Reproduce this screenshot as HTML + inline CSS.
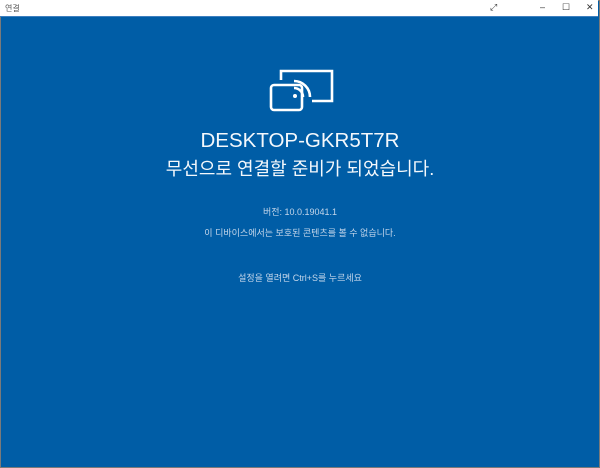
<!DOCTYPE html>
<html><head><meta charset="utf-8"><style>
html,body{margin:0;padding:0;width:600px;height:467px;overflow:hidden;background:#005da6;font-family:"Liberation Sans","Noto Sans CJK KR",sans-serif}
.win{position:absolute;left:0;top:0;width:598px;height:466px;border:1px solid #7a7a7a;border-top-color:#8a7f78}
.tb{position:absolute;left:0;top:0;width:598px;height:16px;background:#fff;border-bottom:1px solid #3d7fbf}
.tb .t{position:absolute;left:5px;top:3px;font-size:8px;color:#555}
.tb span{position:absolute;top:2px;font-size:9px;color:#333}
.c{position:absolute;left:0;width:600px;text-align:center;color:#f4f8fc;white-space:nowrap}
.s{color:#c4d6ea;font-size:9px}
</style></head><body>
<div class="win"></div>
<div class="tb"><div class="t">연결</div>
<span style="left:490px">⤢</span><span style="left:540px">–</span><span style="left:562px">☐</span><span style="left:586px">✕</span></div>
<svg style="position:absolute;left:266px;top:66px" width="70" height="48" viewBox="0 0 70 48">
<g fill="none" stroke="#fff" stroke-width="2.6">
<path d="M15 14V5h51v30H46"/>
<rect x="5" y="19" width="31" height="25" rx="3"/>
<path d="M28 15a16 16 0 0 1 16 16"/>
<path d="M28 22a9 9 0 0 1 9 9"/>
</g><circle cx="29" cy="30" r="2" fill="#fff"/></svg>
<div class="c" style="top:129px;font-size:20.5px">DESKTOP-GKR5T7R</div>
<div class="c" style="top:155px;font-size:18px">무선으로 연결할 준비가 되었습니다.</div>
<div class="c s" style="top:205px">버전: 10.0.19041.1</div>
<div class="c s" style="top:226px">이 디바이스에서는 보호된 콘텐츠를 볼 수 없습니다.</div>
<div class="c s" style="top:271px">설정을 열려면 Ctrl+S를 누르세요</div>
</body></html>
